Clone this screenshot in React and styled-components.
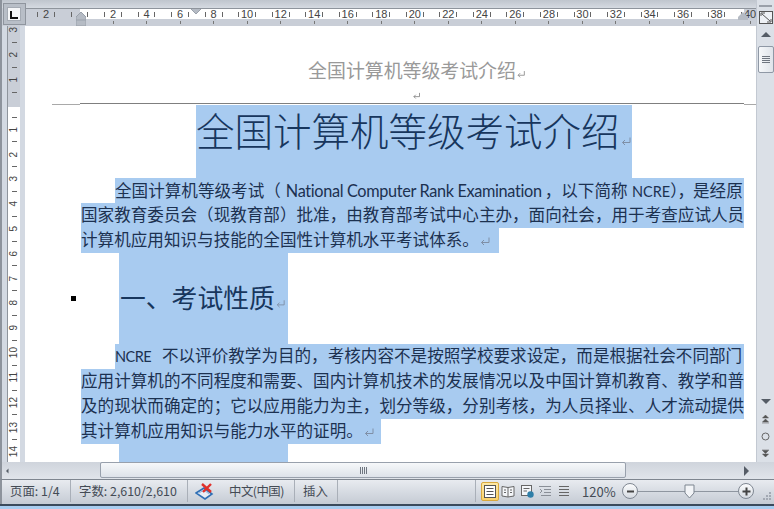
import styled, { createGlobalStyle } from "styled-components";

const CJK = `"Noto Sans CJK SC", "Noto Sans", sans-serif`;
const BODY = `Lato, "Noto Sans CJK SC", sans-serif`;

const GlobalStyle = createGlobalStyle`
  html, body { margin: 0; padding: 0; background: #c9d0da; }
  * { box-sizing: border-box; }
`;

const hMarks = [];
for (let n = -2; n <= 40; n += 2) hMarks.push(n);

const vTop = ["3", "", "2", "", "1", ""];
const vBottom = ["", "1", "", "2", "", "3", "", "4", "", "5", "", "6", "", "7", "", "8", "", "9", "", "10", "", "11", "", "12", "", "13", "", "14", ""];

function ReturnMark({ size = 12, color = "#7f8fa6" }) {
    return <MarkIcon width={size} height={size} viewBox="0 0 12 12" fill="none" stroke={color} strokeWidth="1">
        <path d="M10 2.5 V7.5 H2.5" />
        <path d="M5 5 L2.5 7.5 L5 10" />
    </MarkIcon>;
}

function Triangle({ dir }) {
    const shapes = {
        up: "M0 7 L5 2 L10 7 Z",
        down: "M0 2 H10 L5 7 Z",
        left: "M7 0 V10 L2 5 Z",
        right: "M2 0 V10 L7 5 Z",
    };
    return <svg width="10" height="10" viewBox="0 0 10 10"><path d={shapes[dir]} fill="#555c66" /></svg>;
}

export default function App() {
    return <Frame>
        <GlobalStyle />
        <Upper>
            <DocArea>
                <TopGap />
                <RulerRow>
                    <TabCorner>
                        <TabKey><svg width="8" height="8" viewBox="0 0 8 8"><path d="M1 0 V7 H8" fill="none" stroke="#111" strokeWidth="2" /></svg></TabKey>
                    </TabCorner>
                    <Ruler>
                        {hMarks.map(n => <RulerCell key={n}>
                            <RulerScale>
                                <RulerTick />
                                <RulerDigit>{n !== 0 ? Math.abs(n) : ""}</RulerDigit>
                                <RulerTick />
                            </RulerScale>
                            <TabStop $show={n > 0} />
                        </RulerCell>)}
                        <FirstIndent width="10" height="9" viewBox="0 0 10 9"><path d="M0 0 H10 V3 L5 8 L0 3 Z" fill="#b5bbc4" stroke="#9aa1ab" /></FirstIndent>
                        <LeftIndent width="10" height="15" viewBox="0 0 10 15"><path d="M5 0 L10 5 V14 H0 V5 Z" fill="#b5bbc4" stroke="#9aa1ab" /><path d="M0 8 H10" stroke="#9aa1ab" /></LeftIndent>
                        <RightIndent width="10" height="8" viewBox="0 0 10 8"><path d="M5 0 L10 5 V8 H0 V5 Z" fill="#b5bbc4" /></RightIndent>
                    </Ruler>
                </RulerRow>
                <Body>
                    <SideRuler>
                        {vTop.map((d, i) => <SideCell key={i} $shaded>{d ? <SideDigit>{d}</SideDigit> : <SideTick />}</SideCell>)}
                        <SideCell $shaded $height={8.3} />
                        <SideCell $height={4.15} />
                        {vBottom.map((d, i) => <SideCell key={i}>{d ? <SideDigit>{d}</SideDigit> : <SideTick />}</SideCell>)}
                    </SideRuler>
                    <Page>
                        <PageHeader>全国计算机等级考试介绍<ReturnMark size={10} color="#888" /></PageHeader>
                        <HeaderMark><ReturnMark size={9} color="#777" /></HeaderMark>
                        <HeaderRule>
                            <RuleStub />
                            <RuleMain />
                            <RuleStub $right />
                        </HeaderRule>
                        <TitleBlock>全国计算机等级考试介绍<ReturnMark /></TitleBlock>
                        <Line $indent={90} $width={629}>
                            全国计算机等级考试（<Latin $size={16.3} $spacing={-0.35} $before={5} $after={3}>National Computer Rank Examination</Latin>，以下简称<Latin $size={14.5} $before={4.4}>NCRE</Latin><Squeezed>），</Squeezed>是经原
                        </Line>
                        <Line $indent={56} $width={663}>国家教育委员会（现教育部）批准，由教育部考试中心主办，面向社会，用于考查应试人员</Line>
                        <Line $indent={56} $width={418}>计算机应用知识与技能的全国性计算机水平考试体系。<ReturnMark /></Line>
                        <HeadingRow>
                            <Bullet />
                            <HeadingBlock>一、考试性质<ReturnMark size={11} /></HeadingBlock>
                        </HeadingRow>
                        <Line $indent={90} $width={629}><Latin $size={14.5} $spacing={-0.5} $after={10.7}>NCRE</Latin>不以评价教学为目的，考核内容不是按照学校要求设定，而是根据社会不同部门</Line>
                        <Line $indent={56} $width={663}>应用计算机的不同程度和需要、国内计算机技术的发展情况以及中国计算机教育、教学和普</Line>
                        <Line $indent={56} $width={663}>及的现状而确定的；它以应用能力为主，划分等级，分别考核，为人员择业、人才流动提供</Line>
                        <Line $indent={56} $width={300}>其计算机应用知识与能力水平的证明。<ReturnMark /></Line>
                        <TrailingBlock />
                    </Page>
                </Body>
            </DocArea>
            <VScroll>
                <SplitBar />
                <RulerToggle>
                    <svg width="14" height="13" viewBox="0 0 14 13" fill="none" stroke="#555"><rect x="0.5" y="0.5" width="13" height="12" fill="#eef1f5" /><path d="M2 5 V2 H6 M12 8 V11 H8 M3 3 L11 10" /></svg>
                </RulerToggle>
                <ScrollArrow $height={22}><Triangle dir="up" /></ScrollArrow>
                <VThumb><GripLine /><GripLine /><GripLine /><GripLine /></VThumb>
                <VSpacer />
                <ScrollArrow $height={18}><Triangle dir="down" /></ScrollArrow>
                <BrowseButton>
                    <svg width="9" height="9" viewBox="0 0 9 9"><path d="M4.5 0 L7.5 3 H1.5 Z M4.5 4 L7.5 7 H1.5 Z M1 8 H8" fill="#555" stroke="#555" strokeWidth="0.5" /></svg>
                </BrowseButton>
                <BrowseButton>
                    <svg width="9" height="9" viewBox="0 0 9 9"><circle cx="4.5" cy="4.5" r="3.5" fill="none" stroke="#666" /></svg>
                </BrowseButton>
                <BrowseButton>
                    <svg width="9" height="9" viewBox="0 0 9 9"><path d="M1 1 H8 M4.5 8 L7.5 5 H1.5 Z M4.5 4.5 L7.5 1.5 H1.5 Z" fill="#555" stroke="#555" strokeWidth="0.5" /></svg>
                </BrowseButton>
            </VScroll>
        </Upper>
        <HScroll>
            <HArrow><Triangle dir="left" /></HArrow>
            <HTrack>
                <HThumb><HGrip /><HGrip /><HGrip /><HGrip /></HThumb>
            </HTrack>
            <HArrow $right><Triangle dir="right" /></HArrow>
        </HScroll>
        <StatusBar>
            <StatusItem $width={69}>页面: 1/4</StatusItem>
            <StatusItem $width={117}>字数: 2,610/2,610</StatusItem>
            <StatusItem $width={107} $gap={15}>
                <svg width="19" height="17" viewBox="0 0 19 17">
                    <path d="M1 10 L9 5 L17 11 L10 16 Z" fill="#e9eef6" stroke="#2f6fb5" strokeWidth="1.6" />
                    <path d="M4 10 L9 7 L14 11" fill="none" stroke="#8fb4dd" />
                    <path d="M7 1 L16 9 M16 1 L8 9" stroke="#e0312b" strokeWidth="2.4" />
                </svg>
                <LangLabel>中文(中国)</LangLabel>
            </StatusItem>
            <StatusItem $width={43}>插入</StatusItem>
            <StatusSpacer />
            <ViewGroup>
                <ActiveView>
                    <svg width="14" height="13" viewBox="0 0 14 13" fill="#fff" stroke="#555"><rect x="1.5" y="0.5" width="11" height="12" /><path d="M3.5 3.5 H10.5 M3.5 6.5 H10.5 M3.5 9.5 H10.5" /></svg>
                </ActiveView>
                <ViewButton>
                    <svg width="14" height="13" viewBox="0 0 14 13" fill="#f4f6f9" stroke="#666"><path d="M1 1.5 L7 2.5 L13 1.5 V11 L7 12 L1 11 Z M7 2.5 V12 M3 5 H5 M3 7.5 H5 M9 5 H11 M9 7.5 H11" /></svg>
                </ViewButton>
                <ViewButton>
                    <svg width="14" height="13" viewBox="0 0 14 13"><rect x="1.5" y="0.5" width="10" height="10" fill="#f4f6f9" stroke="#666" /><path d="M3.5 3.5 H9.5 M3.5 6 H7" stroke="#666" /><circle cx="10.5" cy="9.5" r="3.2" fill="#2f7fa8" /></svg>
                </ViewButton>
                <ViewButton>
                    <svg width="14" height="13" viewBox="0 0 14 13" fill="none" stroke="#8a8f97"><path d="M1 1.5 H13 M6 4.5 H13 M6 7.5 H13 M3 10.5 H13 M2 4 L4 6 L2 8" /></svg>
                </ViewButton>
                <ViewButton>
                    <svg width="14" height="13" viewBox="0 0 14 13" fill="none" stroke="#666"><path d="M2 1.5 H12 M2 4.5 H12 M2 7.5 H12 M2 10.5 H12" /></svg>
                </ViewButton>
            </ViewGroup>
            <ZoomLabel>120%</ZoomLabel>
            <ZoomButton><svg width="9" height="9" viewBox="0 0 9 9"><path d="M1 4.5 H8" stroke="#444" strokeWidth="2" /></svg></ZoomButton>
            <ZoomTrack>
                <ZoomThumb width="11" height="15" viewBox="0 0 11 15"><path d="M1 1 H10 V9 L5.5 14 L1 9 Z" fill="#f2f4f7" stroke="#7d8590" /></ZoomThumb>
            </ZoomTrack>
            <ZoomButton><svg width="9" height="9" viewBox="0 0 9 9"><path d="M0.5 4.5 H8.5 M4.5 0.5 V8.5" stroke="#444" strokeWidth="2" /></svg></ZoomButton>
            <ResizeGrip>
                <svg width="11" height="11" viewBox="0 0 11 11" fill="#a3a9b3"><path d="M8 1h2v2H8zM5 4h2v2H5zM8 4h2v2H8zM2 7h2v2H2zM5 7h2v2H5zM8 7h2v2H8z" /></svg>
            </ResizeGrip>
        </StatusBar>
        <BottomStrip />
    </Frame>;
}

const Frame = styled.div`
    width: 774px;
    height: 509px;
    display: flex;
    flex-direction: column;
    overflow: hidden;
    background: #d3d9e2;
`;

const Upper = styled.div`
    height: 462px;
    display: flex;
`;

const DocArea = styled.div`
    width: 756px;
    display: flex;
    flex-direction: column;
    border-left: 2px solid #8d939c;
`;

const TopGap = styled.div`
    height: 8px;
    background: linear-gradient(#bfc5cd, #d5dae1);
`;

const RulerRow = styled.div`
    height: 18px;
    display: flex;
    background: #c9ced7;
`;

const TabCorner = styled.div`
    width: 23px;
    height: 22px;
    margin-top: -5px;
    margin-left: 1px;
    padding-left: 3px;
    flex-shrink: 0;
    display: flex;
    align-items: center;
    background: #b8bec7;
    border: 1px solid #8f959e;
    position: relative;
`;

const TabKey = styled.div`
    width: 14px;
    height: 14px;
    background: #f5f6f8;
    border: 1px solid #a5abb4;
    display: flex;
    align-items: flex-end;
    justify-content: center;
    padding-bottom: 1px;
`;

const Ruler = styled.div`
    position: relative;
    flex: 1;
    display: flex;
    padding-left: 3.2px;
    overflow: hidden;
    border-top: 1px solid #8e949c;
    background:
        linear-gradient(to right, #c9ced7 54px, #fff 54px, #fff 718px, #c9ced7 718px) 0 0 / 100% 10px no-repeat,
        #c9ced7;
`;

const RulerCell = styled.div`
    width: 33.54px;
    flex-shrink: 0;
    display: flex;
    flex-direction: column;
    align-items: center;
`;

const RulerScale = styled.div`
    height: 10px;
    display: flex;
    align-items: center;
`;

const RulerTick = styled.i`
    width: 1px;
    height: 5px;
    background: #666;
    flex-shrink: 0;
`;

const RulerDigit = styled.span`
    width: 15.8px;
    text-align: center;
    font: 11px "Liberation Sans", sans-serif;
    line-height: 10px;
    color: #444;
    white-space: nowrap;
`;

const TabStop = styled.i`
    width: 1px;
    height: 3px;
    margin-top: 2px;
    background: ${({ $show }) => ($show ? "#777" : "transparent")};
`;

const FirstIndent = styled.svg`
    position: absolute;
    left: 165px;
    top: -3px;
`;

const LeftIndent = styled.svg`
    position: absolute;
    left: 50px;
    top: 3px;
`;

const RightIndent = styled.svg`
    position: absolute;
    left: 712px;
    top: 3px;
`;

const Body = styled.div`
    flex: 1;
    min-height: 0;
    display: flex;
`;

const SideRuler = styled.div`
    width: 23px;
    flex-shrink: 0;
    padding-left: 5px;
    padding-right: 5px;
    overflow: hidden;
    background: #d3d9e2;

    & > :first-child {
        margin-top: -2px;
    }
`;

const SideCell = styled.div`
    height: ${({ $height }) => $height || 12.42}px;
    width: 13px;
    display: flex;
    align-items: center;
    justify-content: center;
    background: ${({ $shaded }) => ($shaded ? "#c9ced7" : "#fff")};
    border-left: 1px solid #8e949c;
`;

const SideDigit = styled.span`
    font: 10px "Liberation Sans", sans-serif;
    line-height: 10px;
    color: #444;
    writing-mode: vertical-rl;
    transform: rotate(180deg);
    white-space: nowrap;
`;

const SideTick = styled.i`
    width: 5px;
    height: 1px;
    background: #666;
`;

const Page = styled.div`
    flex: 1;
    min-width: 0;
    overflow: hidden;
    background: #fff;
    font-family: ${BODY};
    font-size: 16.58px;
    color: #1c3150;
`;

const MarkIcon = styled.svg`
    display: inline-block;
    vertical-align: -1px;
    flex-shrink: 0;
`;

const PageHeader = styled.div`
    margin-left: 55px;
    padding-left: 10px;
    width: 664px;
    height: 36px;
    margin-top: 26px;
    text-align: center;
    font-family: ${CJK};
    font-size: 18.9px;
    line-height: 36px;
    color: #999;
`;

const HeaderMark = styled.div`
    margin-left: 55px;
    width: 664px;
    height: 15px;
    line-height: 10px;
    text-align: center;
    padding-left: 8px;
`;

const HeaderRule = styled.div`
    margin-left: 27px;
    display: flex;
    height: 2px;
`;

const RuleStub = styled.i`
    display: block;
    width: ${({ $right }) => ($right ? "12px" : "28px")};
    height: 1px;
    margin-top: 1px;
    background: #a9a9a9;
`;

const RuleMain = styled.i`
    display: block;
    width: 664px;
    height: 1px;
    background: #7f7f7f;
`;

const Highlight = styled.div`
    background: #a8cbf0;
`;

const TitleBlock = styled(Highlight)`
    margin-left: 171px;
    width: 436px;
    height: 73px;
    font-family: ${CJK};
    font-size: 38.5px;
    font-weight: 300;
    line-height: 48px;
    color: #17365d;
    white-space: nowrap;
    overflow: hidden;
`;

const Line = styled(Highlight)`
    margin-left: ${({ $indent }) => $indent}px;
    width: ${({ $width }) => $width}px;
    height: 25px;
    line-height: 25px;
    white-space: nowrap;
    overflow: hidden;
`;

const Latin = styled.span`
    font-size: ${({ $size }) => $size}px;
    letter-spacing: ${({ $spacing }) => $spacing || 0}px;
    margin-left: ${({ $before }) => $before || 0}px;
    margin-right: ${({ $after }) => $after || 0}px;
`;

const Squeezed = styled.span`
    letter-spacing: -1px;
`;

const HeadingRow = styled.div`
    display: flex;
    align-items: center;
`;

const Bullet = styled.i`
    width: 5px;
    height: 5px;
    margin-left: 46px;
    margin-right: 43px;
    background: #000;
    flex-shrink: 0;
`;

const HeadingBlock = styled(Highlight)`
    width: 169px;
    height: 91px;
    padding-top: 27px;
    padding-left: 1px;
    font-family: ${CJK};
    font-size: 25.8px;
    line-height: 34px;
    color: #17365d;
    white-space: nowrap;
    overflow: hidden;
`;

const TrailingBlock = styled(Highlight)`
    margin-left: 94px;
    width: 169px;
    height: 40px;
`;

const VScroll = styled.div`
    width: 18px;
    display: flex;
    flex-direction: column;
    align-items: center;
    background: #dbe0e7;
    border-left: 1px solid #c3c9d2;
`;

const SplitBar = styled.i`
    width: 13px;
    height: 2px;
    margin-top: 5px;
    background: #9aa0a9;
`;

const RulerToggle = styled.div`
    height: 17px;
    display: flex;
    align-items: flex-end;
`;

const ScrollArrow = styled.div`
    height: ${({ $height }) => $height}px;
    display: flex;
    align-items: center;
    justify-content: center;
    flex-shrink: 0;
`;

const VThumb = styled.div`
    width: 16px;
    height: 27px;
    display: flex;
    flex-direction: column;
    align-items: center;
    justify-content: center;
    gap: 1px;
    background: linear-gradient(to right, #f6f8fa, #dfe4ea);
    border: 1px solid #8f98a5;
    border-radius: 2px;
    flex-shrink: 0;
`;

const GripLine = styled.i`
    width: 8px;
    height: 1px;
    background: #6f7680;
`;

const VSpacer = styled.div`
    flex: 1;
`;

const BrowseButton = styled.div`
    height: 17px;
    display: flex;
    align-items: center;
    justify-content: center;
    flex-shrink: 0;
`;

const HScroll = styled.div`
    height: 17px;
    display: flex;
    border-left: 2px solid #8d939c;
    background: linear-gradient(#cfd4dc, #e0e4ea);
`;

const HArrow = styled.div`
    width: ${({ $right }) => ($right ? "46px" : "8px")};
    padding-left: ${({ $right }) => ($right ? "14px" : "3px")};
    display: flex;
    align-items: center;
    flex-shrink: 0;
`;

const HTrack = styled.div`
    flex: 1;
    padding-left: 90px;
`;

const HThumb = styled.div`
    width: 526px;
    height: 16px;
    display: flex;
    align-items: center;
    justify-content: center;
    gap: 1px;
    background: linear-gradient(#f6f8fa, #dde2e9);
    border: 1px solid #98a0ac;
    border-radius: 2px;
`;

const HGrip = styled.i`
    width: 1px;
    height: 7px;
    background: #6f7680;
`;

const StatusBar = styled.div`
    height: 25px;
    display: flex;
    align-items: center;
    padding-bottom: 2px;
    border-top: 1px solid #7e858f;
    border-left: 2px solid #8d939c;
    background: linear-gradient(#e8ebf0, #c5cbd4);
    font-family: ${CJK};
    font-size: 12.4px;
    color: #444b55;
`;

const StatusItem = styled.div`
    width: ${({ $width }) => $width}px;
    height: 100%;
    display: flex;
    align-items: center;
    gap: ${({ $gap }) => $gap || 0}px;
    padding-left: ${({ $gap }) => ($gap ? 7 : 8)}px;
    border-right: 1px solid #a9afb8;
    white-space: nowrap;
    flex-shrink: 0;
`;

const LangLabel = styled.span`
    letter-spacing: -0.5px;
`;

const StatusSpacer = styled.div`
    flex: 1;
`;

const ViewGroup = styled.div`
    width: 107px;
    height: 100%;
    flex-shrink: 0;
    display: flex;
    align-items: center;
    padding-left: 5px;
    border-left: 1px solid #a9afb8;
`;

const ActiveView = styled.div`
    width: 18px;
    height: 19px;
    display: flex;
    align-items: center;
    justify-content: center;
    background: linear-gradient(#fde9a8, #fbd26c);
    border: 1px solid #d9a93d;
    border-radius: 2px;
`;

const ViewButton = styled.div`
    width: 18.5px;
    display: flex;
    justify-content: center;
`;

const ZoomLabel = styled.div`
    width: 40px;
    font-size: 13px;
    flex-shrink: 0;
`;

const ZoomButton = styled.div`
    width: 16px;
    height: 16px;
    border-radius: 50%;
    display: flex;
    align-items: center;
    justify-content: center;
    background: linear-gradient(#fbfcfd, #d5dae1);
    border: 1px solid #7f8792;
    flex-shrink: 0;
    position: relative;
    z-index: 1;
`;

const ZoomTrack = styled.div`
    width: 100px;
    height: 1px;
    position: relative;
    background: #8f96a0;
    flex-shrink: 0;
`;

const ZoomThumb = styled.svg`
    position: absolute;
    left: 46px;
    top: -7px;
`;

const ResizeGrip = styled.div`
    width: 20px;
    height: 100%;
    flex-shrink: 0;
    display: flex;
    align-items: flex-end;
    justify-content: flex-end;
    padding-right: 2px;
`;

const BottomStrip = styled.div`
    flex: 1;
    border-top: 2px solid #3b4a5c;
    background: #a9cdf0;
`;
